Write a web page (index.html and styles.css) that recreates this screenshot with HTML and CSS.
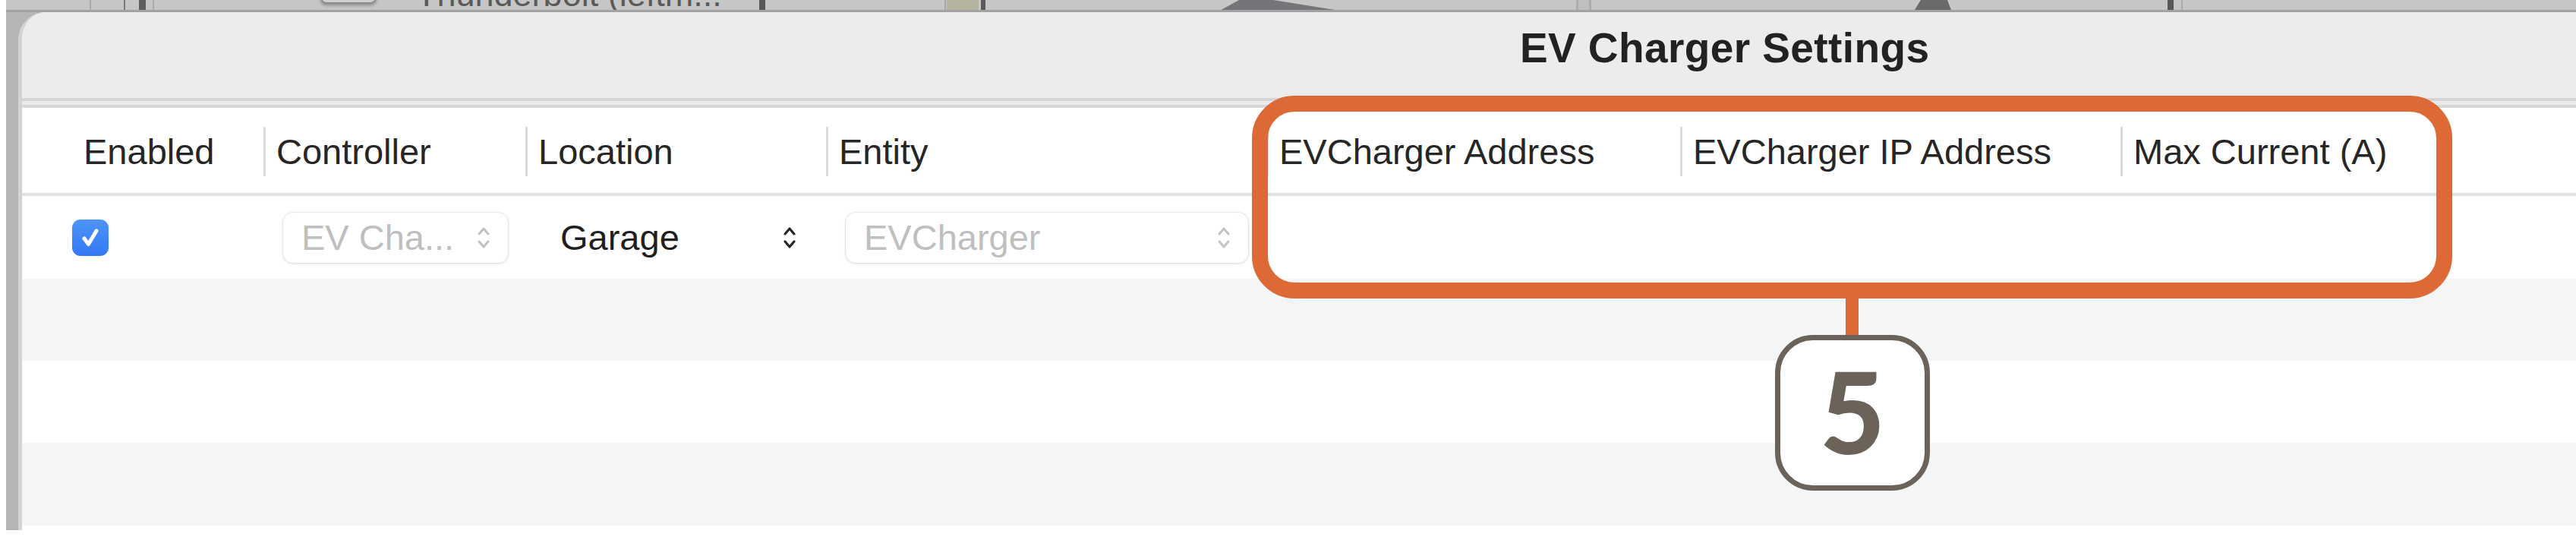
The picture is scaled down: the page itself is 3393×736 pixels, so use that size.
FILE: index.html
```html
<!DOCTYPE html>
<html lang="en">
<head>
<meta charset="utf-8">
<title>EV Charger Settings</title>
<link rel="stylesheet" href="styles.css">
</head>
<body>
<div class="screen">
  <div class="desk">
    <div class="bit l1"></div>
    <div class="bit d1"></div>
    <div class="bit d2"></div>
    <div class="bit l2"></div>
    <div class="bit deskbox"></div>
    <div class="bit desktext">Thunderbolt (leftm...</div>
    <div class="bit d3"></div>
    <div class="bit l3"></div>
    <div class="bit olive"></div>
    <div class="bit d4"></div>
    <svg class="bit tri" width="174" height="16" viewBox="0 0 174 16"><polygon points="0,16 29,0 74,0 174,16" fill="#747479"/></svg>
    <div class="bit l4"></div>
    <svg class="bit fig" width="51" height="16" viewBox="0 0 51 16"><polygon points="0,16 10,0 45,0 51,16" fill="#6a6a6a"/></svg>
    <div class="bit d5"></div>
    <div class="bit l5"></div>
    <div class="bit seg"></div>
  </div>

  <div class="window">
    <div class="titlebar"><h1 class="title">EV Charger Settings</h1></div>
    <div class="divider"></div>
    <div class="table">
      <div class="row head">
        <div class="hcell"><span class="hd first">Enabled</span></div>
        <div class="hcell"><span class="hd">Controller</span></div>
        <div class="hcell"><span class="hd">Location</span></div>
        <div class="hcell"><span class="hd">Entity</span></div>
        <div class="hcell"><span class="hd">EVCharger Address</span></div>
        <div class="hcell"><span class="hd">EVCharger IP Address</span></div>
        <div class="hcell"><span class="hd">Max Current (A)</span></div>
        <div class="hcell"></div>
      </div>
      <div class="row body r1">
        <div class="cell">
          <span class="check">
            <svg width="32" height="32" viewBox="0 0 32 32"><path d="M8 17 L13.5 24.5 L24 7" fill="none" stroke="#fff" stroke-width="5" stroke-linecap="round" stroke-linejoin="round"/></svg>
          </span>
        </div>
        <div class="cell">
          <div class="popup ctrl">
            <span>EV Cha...</span>
            <svg class="chev" width="20" height="34" viewBox="0 0 20 34"><path d="M4 12 L10 5 L16 12 M4 22 L10 29 L16 22" fill="none" stroke="#c2c2c2" stroke-width="3" stroke-linecap="round" stroke-linejoin="round"/></svg>
          </div>
        </div>
        <div class="cell loc">
          <span>Garage</span>
          <svg class="chev" width="20" height="34" viewBox="0 0 20 34"><path d="M4 12 L10 5 L16 12 M4 22 L10 29 L16 22" fill="none" stroke="#262626" stroke-width="3.2" stroke-linecap="round" stroke-linejoin="round"/></svg>
        </div>
        <div class="cell">
          <div class="popup ent">
            <span>EVCharger</span>
            <svg class="chev" width="20" height="34" viewBox="0 0 20 34"><path d="M4 12 L10 5 L16 12 M4 22 L10 29 L16 22" fill="none" stroke="#c2c2c2" stroke-width="3" stroke-linecap="round" stroke-linejoin="round"/></svg>
          </div>
        </div>
        <div class="cell"></div>
        <div class="cell"></div>
        <div class="cell"></div>
        <div class="cell"></div>
      </div>
      <div class="row body r2 alt"></div>
      <div class="row body r3"></div>
      <div class="row body r4 alt"></div>
    </div>
  </div>

  <div class="callout"></div>
  <div class="connector"></div>
  <div class="badge">5</div>
</div>
</body>
</html>
```

FILE: styles.css
```css
html, body {
  background: #ffffff;
}
body {
  margin: 0 0 0 8px;
  overflow: hidden;
  font-family: "Liberation Sans", Arial, sans-serif;
}

.screen {
  position: relative;
  height: 698px;
  background: #b5b5b5;
  overflow: hidden;
}

/* blurred desktop strip behind the sheet */
.desk {
  position: relative;
  height: 16px;
  box-sizing: border-box;
  background: #c6c6c6;
  border-bottom: 3px solid #a2a2a2;
  overflow: hidden;
}
.bit { position: absolute; top: 0; height: 16px; }
.l1 { left: 110px; width: 2px; background: #a9a9a9; }
.d1 { left: 155px; width: 2px; background: #7a7a7a; }
.d2 { left: 175px; width: 9px; background: #5f5f5f; }
.l2 { left: 193px; width: 2px; background: #aaaaaa; }
.deskbox {
  left: 414px; top: -26px; width: 74px; height: 31px;
  box-sizing: border-box;
  border: 2px solid #8c8c8c; border-radius: 8px;
  background: #d0d0d0;
  box-shadow: 0 2px 4px rgba(0,0,0,.3);
}
.desktext {
  left: 540px; top: -33px; height: auto;
  font-size: 45px; color: #5a5a5a; white-space: nowrap;
}
.d3 { left: 992px; width: 8px; background: #585858; }
.l3 { left: 1236px; width: 2px; background: #a8a8a8; }
.olive { left: 1239px; width: 42px; background: #b3b3a0; }
.d4 { left: 1284px; width: 6px; background: #5a5a5a; }
.tri { left: 1595px; }
.l4 { left: 2068px; width: 14px; border-left: 3px solid #adadad; border-right: 3px solid #adadad; background: #c0c0c0; }
.fig { left: 2512px; }
.d5 { left: 2847px; width: 8px; background: #585858; }
.l5 { left: 2865px; width: 2px; background: #aaaaaa; }
.seg { left: 3014px; top: 13px; width: 27px; height: 3px; background: #7d7d7d; }

/* sheet window */
.window {
  margin-left: 16px;
  height: 682px;
  background: #ffffff;
  border-left: 5px solid #d3d3d3;
  border-top-left-radius: 36px;
  overflow: hidden;
}
.titlebar {
  height: 113px;
  box-sizing: border-box;
  padding: 17px 0 0 1973px;
  background: #ececec;
}
.title {
  margin: 0;
  font-size: 55px;
  font-weight: 700;
  line-height: 61px;
  letter-spacing: 0.4px;
  color: #222222;
  white-space: nowrap;
}
.divider {
  height: 5px;
  border-top: 4px solid #d5d5d5;
  border-bottom: 4px solid #d8d8d8;
  background: #ebebeb;
}

.row {
  display: grid;
  grid-template-columns: 318px 345px 396px 580px 545px 580px 1fr;
  grid-template-rows: 100%;
}
.head {
  height: 116px;
  box-sizing: border-box;
  padding-top: 25px;
  align-items: start;
  border-bottom: 4px solid #e1e1e1;
}
.hd {
  display: block;
  border-left: 3px solid #dadada;
  padding-left: 14px;
  line-height: 65px;
  font-size: 47px;
  color: #262626;
  white-space: nowrap;
}
.hd.first {
  border-left: 0;
  padding-left: 81px;
}

.body { align-items: stretch; }
.r1 { height: 109px; }
.r2 { height: 108px; }
.r3 { height: 108px; }
.r4 { height: 109px; }
.alt { background: #f4f5f5; }

.cell {
  display: flex;
  align-items: center;
  height: 100%;
}

.check {
  display: flex;
  align-items: center;
  justify-content: center;
  width: 48px;
  height: 48px;
  margin-left: 66px;
  border-radius: 11px;
  background: linear-gradient(#4d94f8, #3478f6);
}

.popup {
  display: flex;
  align-items: center;
  justify-content: space-between;
  height: 68px;
  margin-left: 25px;
  box-sizing: border-box;
  padding: 0 22px 0 24px;
  border: 1px solid #e6e6e6;
  border-radius: 14px;
  background: #ffffff;
  box-shadow: 0 1px 3px rgba(0,0,0,.09);
  font-size: 47px;
  color: #bfbfbf;
  white-space: nowrap;
}
.ctrl { width: 298px; }
.ent { width: 532px; }

.loc {
  justify-content: space-between;
  padding: 0 38px 0 46px;
  box-sizing: border-box;
  font-size: 47px;
  color: #1f1f1f;
}

/* annotation overlay */
.callout {
  position: absolute;
  left: 1641px;
  top: 126px;
  width: 1581px;
  height: 267px;
  box-sizing: border-box;
  border: 21px solid #dd6936;
  border-radius: 56px;
}
.connector {
  position: absolute;
  left: 2423px;
  top: 392px;
  width: 17px;
  height: 50px;
  background: #dd6936;
}
.badge {
  position: absolute;
  left: 2330px;
  top: 441px;
  width: 204px;
  height: 205px;
  box-sizing: border-box;
  padding-bottom: 6px;
  border: 7px solid #6b635a;
  border-radius: 50px;
  background: #ffffff;
  display: flex;
  align-items: center;
  justify-content: center;
  font-family: Lato, "Open Sans", sans-serif;
  font-weight: 900;
  font-size: 148px;
  line-height: 1;
  color: #6b635a;
}
```
